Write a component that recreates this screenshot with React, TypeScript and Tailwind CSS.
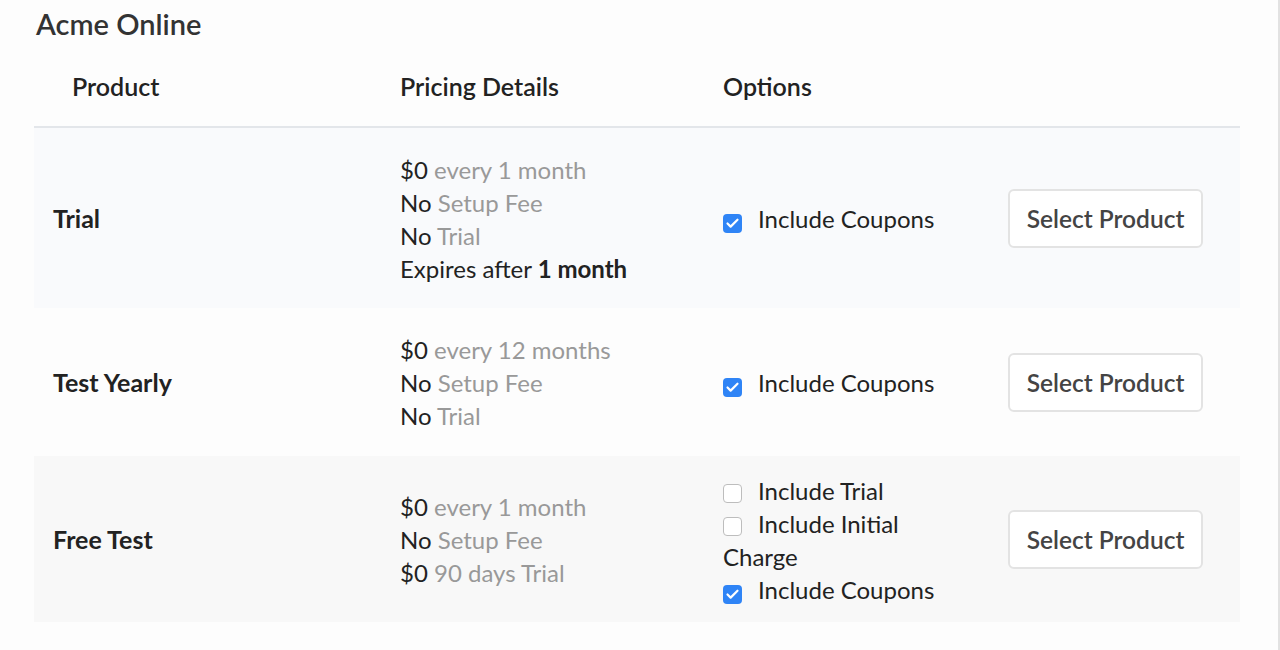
import { Check } from "lucide-react"

interface Product {
  name: string
  price: string
  period: string
  setup: string
  trial: [string, string]
  expires?: string
  options: { label: string; checked: boolean }[]
}

const products: Product[] = [
  {
    name: "Trial",
    price: "$0",
    period: "every 1 month",
    setup: "No",
    trial: ["No", "Trial"],
    expires: "1 month",
    options: [{ label: "Include Coupons", checked: true }],
  },
  {
    name: "Test Yearly",
    price: "$0",
    period: "every 12 months",
    setup: "No",
    trial: ["No", "Trial"],
    options: [{ label: "Include Coupons", checked: true }],
  },
  {
    name: "Free Test",
    price: "$0",
    period: "every 1 month",
    setup: "No",
    trial: ["$0", "90 days Trial"],
    options: [
      { label: "Include Trial", checked: false },
      { label: "Include Initial Charge", checked: false },
      { label: "Include Coupons", checked: true },
    ],
  },
]

const rowBg = ["bg-[#f9fafc]", "bg-[#fdfdfd]", "bg-[#f8f8f8]"]
const pricingPad = ["pt-[25px] pb-[23px]", "pt-[25px] pb-[24px]", "py-[17px]"]

function Checkbox({ checked }: { checked: boolean }) {
  if (checked) {
    return (
      <span className="inline-flex items-center justify-center w-[19px] h-[19px] rounded-[4px] bg-[#2f84f6] align-[-3px] mr-[16px]">
        <Check className="w-[15px] h-[15px] text-white" strokeWidth={3.5} />
      </span>
    )
  }
  return (
    <span className="inline-block w-[19px] h-[19px] rounded-[4px] bg-white border-[1.5px] border-[#bdbdbd] align-[-3px] mr-[16px]" />
  )
}

export default function App() {
  return (
    <div
      className="w-full min-h-screen bg-[#fdfdfd] border-r-2 border-[#e2e2e2] text-[#222]"
      style={{ fontFamily: "Lato, 'Open Sans', sans-serif" }}
    >
      <h1 className="pl-[36px] pt-[6px] text-[29px] leading-[36px] font-semibold text-[#333]">Acme Online</h1>

      <table className="ml-[34px] w-[1206px] table-fixed border-collapse text-[24px] leading-[33px]">
        <colgroup>
          <col className="w-[366px]" />
          <col className="w-[323px]" />
          <col className="w-[240px]" />
          <col />
        </colgroup>
        <thead>
          <tr className="border-b-2 border-[#e3e6ea] text-[25px]">
            <th className="pl-[38px] pt-[28px] pb-[23px] text-left font-semibold text-[#222]">Product</th>
            <th className="pt-[28px] pb-[23px] text-left font-semibold text-[#222]">Pricing Details</th>
            <th className="pt-[28px] pb-[23px] text-left font-semibold text-[#222]">Options</th>
            <th />
          </tr>
        </thead>
        <tbody>
          {products.map((p, i) => (
            <tr key={p.name} className={rowBg[i]}>
              <td className="pl-[19px] align-middle text-[25px] font-bold text-[#222]">{p.name}</td>
              <td className={`align-middle ${pricingPad[i]}`}>
                <div>
                  {p.price} <span className="text-[#999]">{p.period}</span>
                </div>
                <div>
                  {p.setup} <span className="text-[#999]">Setup Fee</span>
                </div>
                <div>
                  {p.trial[0]} <span className="text-[#999]">{p.trial[1]}</span>
                </div>
                {p.expires && (
                  <div>
                    Expires after <span className="font-bold">{p.expires}</span>
                  </div>
                )}
              </td>
              <td className={`align-middle ${i === 2 ? "pt-[18px] pb-[16px]" : ""}`}>
                {p.options.map((o) => (
                  <div key={o.label}>
                    <Checkbox checked={o.checked} />
                    {o.label}
                  </div>
                ))}
              </td>
              <td className="align-middle text-right pr-[37px]">
                <button className="w-[195px] h-[59px] rounded-[6px] border-2 border-[#e3e3e3] bg-white text-[24.5px] font-semibold text-[#444]">
                  Select Product
                </button>
              </td>
            </tr>
          ))}
        </tbody>
      </table>
    </div>
  )
}
